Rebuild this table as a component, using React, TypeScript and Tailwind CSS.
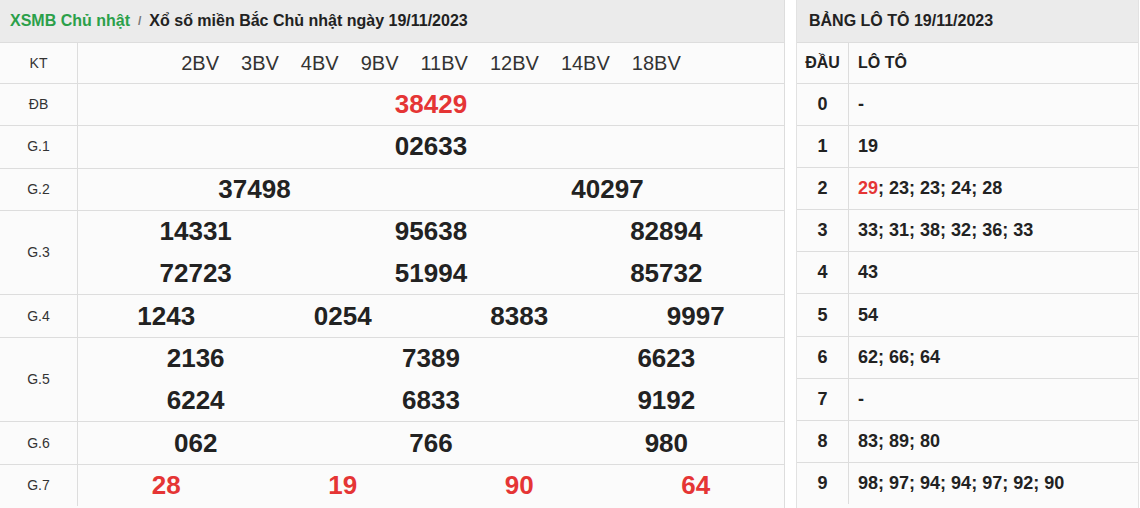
import React from 'react'

const codes = ['2BV', '3BV', '4BV', '9BV', '11BV', '12BV', '14BV', '18BV']

interface Prize {
  label: string
  cols: number
  nums: string[]
  red?: boolean
}

const prizes: Prize[] = [
  { label: 'ĐB', cols: 1, nums: ['38429'], red: true },
  { label: 'G.1', cols: 1, nums: ['02633'] },
  { label: 'G.2', cols: 2, nums: ['37498', '40297'] },
  { label: 'G.3', cols: 3, nums: ['14331', '95638', '82894', '72723', '51994', '85732'] },
  { label: 'G.4', cols: 4, nums: ['1243', '0254', '8383', '9997'] },
  { label: 'G.5', cols: 3, nums: ['2136', '7389', '6623', '6224', '6833', '9192'] },
  { label: 'G.6', cols: 3, nums: ['062', '766', '980'] },
  { label: 'G.7', cols: 4, nums: ['28', '19', '90', '64'], red: true },
]

const loto: { dau: string; vals: string[] }[] = [
  { dau: '0', vals: ['-'] },
  { dau: '1', vals: ['19'] },
  { dau: '2', vals: ['29', '23', '23', '24', '28'] },
  { dau: '3', vals: ['33', '31', '38', '32', '36', '33'] },
  { dau: '4', vals: ['43'] },
  { dau: '5', vals: ['54'] },
  { dau: '6', vals: ['62', '66', '64'] },
  { dau: '7', vals: ['-'] },
  { dau: '8', vals: ['83', '89', '80'] },
  { dau: '9', vals: ['98', '97', '94', '94', '97', '92', '90'] },
]

const gridCols: Record<number, string> = {
  1: 'grid-cols-1',
  2: 'grid-cols-2',
  3: 'grid-cols-3',
  4: 'grid-cols-4',
}

export default function App() {
  return (
    <div className="flex w-[1140px] h-[508px] bg-white overflow-hidden font-['Liberation_Sans',Arial,sans-serif] text-[#222]">
      {/* Results table */}
      <div className="w-[785px] shrink-0 border-r border-[#dddddd] bg-[#fbfbfb]">
        <div className="h-[42px] bg-[#ebebeb] flex items-center pl-[10px] text-[16px] font-bold">
          <span className="text-[#2ba04a]">XSMB Chủ nhật</span>
          <span className="text-[#777] text-[12px] mx-[8px]">/</span>
          <span>Xổ số miền Bắc Chủ nhật ngày 19/11/2023</span>
        </div>

        <div className="flex h-[41px] border-t border-[#dddddd]">
          <div className="w-[78px] shrink-0 border-r border-[#dddddd] flex items-center justify-center text-[14px] text-[#333]">
            KT
          </div>
          <div className="flex-1 flex items-center justify-center gap-[22px] text-[20px] text-[#333]">
            {codes.map((c) => (
              <span key={c}>{c}</span>
            ))}
          </div>
        </div>

        {prizes.map((p) => (
          <div key={p.label} className="flex border-t border-[#dddddd]">
            <div className="w-[78px] shrink-0 border-r border-[#dddddd] flex items-center justify-center text-[14px] text-[#333]">
              {p.label}
            </div>
            <div className={`flex-1 grid ${gridCols[p.cols]}`}>
              {p.nums.map((n, i) => (
                <div
                  key={i}
                  className={`flex items-center justify-center font-bold text-[26px] ${
                    i < p.cols ? 'h-[41.3px]' : 'h-[42.3px]'
                  } ${p.red ? 'text-[#e53535]' : 'text-[#222]'}`}
                >
                  {n}
                </div>
              ))}
            </div>
          </div>
        ))}
      </div>

      <div className="w-[11px] shrink-0 bg-white" />

      {/* Loto table */}
      <div className="flex-1 border-l border-r border-[#e2e2e2] bg-[#fbfbfb] mr-[1px]">
        <div className="h-[42px] bg-[#ebebeb] flex items-center pl-[12px] text-[16px] font-bold">
          BẢNG LÔ TÔ 19/11/2023
        </div>
        <div className="flex h-[40.5px] border-t border-[#dddddd] text-[16px] font-bold">
          <div className="w-[52px] shrink-0 border-r border-[#dddddd] flex items-center justify-center">
            ĐẦU
          </div>
          <div className="flex-1 flex items-center pl-[9px]">LÔ TÔ</div>
        </div>
        {loto.map((r) => (
          <div key={r.dau} className="flex h-[42.2px] border-t border-[#dddddd] text-[18px] font-bold">
            <div className="w-[52px] shrink-0 border-r border-[#dddddd] flex items-center justify-center">
              {r.dau}
            </div>
            <div className="flex-1 flex items-center pl-[9px]">
              {r.vals.map((v, i) => (
                <span key={i} className="whitespace-pre">
                  {i > 0 && '; '}
                  <span className={r.dau === '2' && i === 0 ? 'text-[#e53535]' : ''}>{v}</span>
                </span>
              ))}
            </div>
          </div>
        ))}
      </div>
    </div>
  )
}
